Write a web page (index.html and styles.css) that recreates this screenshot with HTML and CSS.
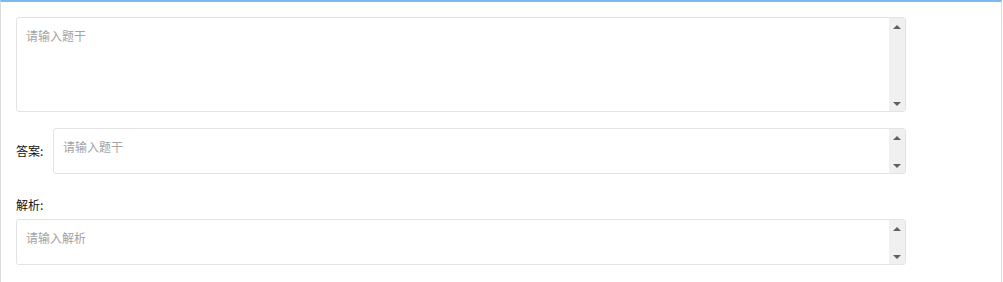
FILE: index.html
```html
<!DOCTYPE html>
<html lang="zh-CN">
<head>
    <meta charset="UTF-8">
    <title>题目编辑</title>
    <link rel="stylesheet" href="styles.css">
</head>
<body>
    <div class="panel">
        <div class="question-form">
            <div class="field-box tall">
                <textarea class="field-input" placeholder="请输入题干"></textarea>
                <div class="scroll-bar"><span class="arrow up"></span><span class="arrow down"></span></div>
            </div>

            <div class="answer-row">
                <label class="field-label inline">答案:</label>
                <div class="field-box short">
                    <textarea class="field-input" placeholder="请输入题干"></textarea>
                    <div class="scroll-bar"><span class="arrow up"></span><span class="arrow down"></span></div>
                </div>
            </div>

            <label class="field-label">解析:</label>
            <div class="field-box short">
                <textarea class="field-input" placeholder="请输入解析"></textarea>
                <div class="scroll-bar"><span class="arrow up"></span><span class="arrow down"></span></div>
            </div>
        </div>
    </div>
</body>
</html>
```

FILE: styles.css
```css
body {
    margin: 0;
    background-color: #ffffff;
    font-family: "Microsoft YaHei", "Noto Sans CJK SC", sans-serif;
    font-size: 12px;
    color: #222222;
}

.panel {
    width: 1002px;
    height: 290px;
    box-sizing: border-box;
    border: 1px solid #dcdcdc;
    border-top: 2px solid #7db8f2;
    padding: 15px 0 0 15px;
}

.question-form {
    width: 890px;
    display: flex;
    flex-direction: column;
}

.field-box {
    display: flex;
    border: 1px solid #e3e3e3;
    border-radius: 3px;
    box-sizing: border-box;
    background-color: #ffffff;
}

.field-box.tall {
    height: 95px;
    margin-bottom: 16px;
}

.field-box.short {
    height: 46px;
}

.answer-row .field-box {
    flex: 1;
}

.field-input {
    flex: 1;
    border: none;
    outline: none;
    resize: none;
    overflow: hidden;
    padding: 9px 9px;
    font-family: inherit;
    font-size: 12px;
    line-height: 18px;
    color: #333333;
    background: transparent;
}

.field-input::placeholder {
    color: #a3a3a3;
}

.scroll-bar {
    width: 16px;
    background-color: #f0f0f0;
    display: flex;
    flex-direction: column;
    align-items: center;
    justify-content: space-between;
    padding: 7px 0 5px;
    box-sizing: border-box;
}

.arrow {
    width: 0;
    height: 0;
    border-left: 4px solid transparent;
    border-right: 4px solid transparent;
}

.arrow.up {
    border-bottom: 4px solid #606060;
}

.arrow.down {
    border-top: 4px solid #606060;
}

.answer-row {
    display: flex;
    align-items: center;
    margin-bottom: 22px;
}

.field-label {
    line-height: 18px;
    margin-bottom: 5px;
    color: #111111;
}

.field-label.inline {
    width: 37px;
    flex-shrink: 0;
    margin-bottom: 0;
}
```
